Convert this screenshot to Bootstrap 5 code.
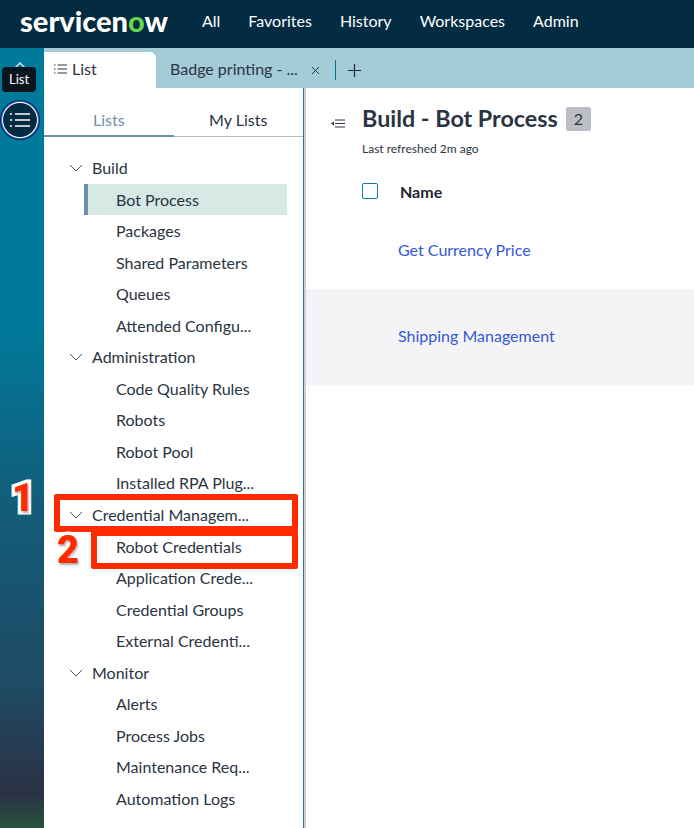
<!DOCTYPE html>
<html lang="en">
<head>
  <meta charset="UTF-8" />
  <meta name="viewport" content="width=device-width, initial-scale=1.0"/>
  <title>Build - Bot Process</title>
  <link href="https://cdn.jsdelivr.net/npm/bootstrap@5.3.0/dist/css/bootstrap.min.css" rel="stylesheet"/>
  <style>
    html, body { height: 100%; }
    body {
      width: 694px;
      height: 828px;
      overflow: hidden;
      position: relative;
      font-family: Lato, "Liberation Sans", sans-serif;
      font-size: 16px;
      color: #2b3442;
      background: #fff;
    }

    /* Top bar */
    .sn-top { height: 48px; background: #032b42; color: #fff; padding-bottom: 6px; }
    .sn-logo { width: 180px; padding-left: 20px; font-size: 29px; font-weight: 900; line-height: 40px; height: 40px; }
    .sn-logo b { color: #62d84e; font-weight: 900; }
    .sn-menu { gap: 28px; padding-left: 22px; }

    /* Left rail */
    .sn-body { height: 780px; }
    .sn-rail {
      width: 44px;
      flex: none;
      background: linear-gradient(180deg, #007a9b 0%, #007a9b 35%, #125d7a 58%, #1f4a63 82%, #2b3145 95.5%, #27533f 100%);
      position: relative;
    }
    .sn-rail-btn {
      position: absolute; left: 3px; top: 55px;
      width: 34px; height: 34px; border-radius: 50%;
      background: #032b42;
      box-shadow: 0 0 0 1px #fff, 0 0 0 2px #4a5fe0, 0 0 0 3px #032b42;
      display: flex; align-items: center; justify-content: center;
    }
    .sn-caret { position: absolute; left: 13px; top: 14px; }
    .sn-tip {
      position: absolute; left: 2px; top: 19px;
      width: 34px; height: 25px; border-radius: 4px;
      background: #0b1520; color: #fff;
      font-size: 13px; line-height: 24px; text-align: center;
    }

    /* Tabs */
    .sn-tabs { height: 40px; background: #a3cbd8; padding-top: 4px; }
    .sn-tab-on { width: 112px; background: #fff; border-top-right-radius: 6px; padding: 0 0 2px 10px; gap: 5px; }
    .sn-tab-off { width: 152px; padding-left: 14px; margin-bottom: 3px; }
    .sn-tab-x { margin-left: 3px; }
    .sn-tab-sep { width: 1px; height: 20px; background: #0a6f8f; margin-left: 15px; }
    .sn-tab-plus { margin-left: 12px; }

    /* Side list */
    .sn-side { width: 262px; flex: none; border-right: 3px solid #ccd0d8; position: relative; }
    .sn-side::after { content: ""; position: absolute; right: -1px; top: 0; bottom: 0; width: 1px; background: #33708c; }
    .sn-sw { height: 49px; padding-top: 22px; }
    .sn-sw div { flex: 1 1 0; text-align: center; height: 27px; border-bottom: 1px solid #b8bcc8; line-height: 19px; }
    .sn-sw .sn-sw-on { color: #6f8fae; border-bottom: 2px solid #6f8fae; }
    .sn-tree { padding-top: 15px; }
    .sn-row { height: 31.55px; line-height: 31.5px; white-space: nowrap; }
    .sn-group { padding-left: 48px; position: relative; }
    .sn-group svg { position: absolute; left: 25px; top: 12px; }
    .sn-leaf { padding-left: 72px; }
    .sn-leaf-on { margin-left: 40px; width: 203px; padding-left: 28px; background: #d7e9e4; border-left: 4px solid #6f8fae; }

    /* Main */
    .sn-main { flex: 1 1 auto; min-width: 0; position: relative; }
    .sn-head { padding: 12px 0 0 56px; height: 80px; }
    .sn-collapse { position: absolute; left: 25px; top: 31px; }
    .sn-title { font-size: 23.3px; font-weight: 700; line-height: 36px; margin: 0; color: #2b3442; }
    .sn-count { background: #bdbdc7; border-radius: 2px; font-size: 16px; padding: 0 8px; height: 24px; line-height: 24px; margin: 2px 0 0 8px; display: inline-block; font-weight: 400; }
    .sn-refresh { font-size: 12px; line-height: 14px; margin-top: 6px; }
    .sn-th { padding: 15px 0 0 56px; height: 62px; gap: 22px; font-weight: 700; color: #1f2733; }
    .sn-check { width: 16px; height: 16px; border: 1.5px solid #0a7b9c; border-radius: 2px; }
    .sn-cell { padding-left: 92px; }
    .sn-cell a { color: #3558d4; text-decoration: none; }
    .sn-cell-a { height: 59px; padding-top: 8px; }
    .sn-cell-b { height: 96px; padding-top: 35px; background: #f4f4f6; }

    /* Annotations */
    .sn-mark { position: absolute; border: 6px solid #ff2a00; border-radius: 2px; }
    .sn-mark-1 { left: 54px; top: 494px; width: 244px; height: 38px; }
    .sn-mark-2 { left: 91px; top: 530px; width: 207px; height: 39px; }
    .sn-num {
      position: absolute; font-family: Roboto, "Liberation Sans", sans-serif; font-weight: 900;
      font-size: 38px; line-height: 38px; color: #ff2a00;
      -webkit-text-stroke: 7px #fff; paint-order: stroke fill;
      text-shadow: 1px 2px 2px rgba(0,0,0,.3);
    }
    .sn-num-1 { left: 12px; top: 479px; }
    .sn-num-2 { left: 57px; top: 531px; }
  </style>
</head>
<body>

<!-- Top bar -->
<div class="sn-top d-flex align-items-center">
  <div class="sn-logo">servicen<b>o</b>w</div>
  <div class="sn-menu d-flex">
    <span>All</span><span>Favorites</span><span>History</span><span>Workspaces</span><span>Admin</span>
  </div>
</div>

<div class="sn-body d-flex">
  <!-- Rail -->
  <div class="sn-rail">
    <svg class="sn-caret" width="14" height="8" viewBox="0 0 14 8"><path d="M1 7 7 1l6 6" fill="none" stroke="#cfe3ea" stroke-width="1.5"/></svg>
    <div class="sn-tip">List</div>
    <div class="sn-rail-btn">
      <svg width="20" height="14" viewBox="0 0 20 14"><path d="M0 1h2M0 7h2M0 13h2M5 1h15M5 7h15M5 13h15" stroke="#fff" stroke-width="1.5"/></svg>
    </div>
  </div>

  <div class="flex-grow-1 d-flex flex-column" style="min-width:0">
    <!-- Tabs -->
    <div class="sn-tabs d-flex align-items-center">
      <div class="sn-tab-on d-flex align-items-center h-100">
        <svg width="13" height="10" viewBox="0 0 13 10"><path d="M0 1h1.500M0 5h1.500M0 9h1.500M3.500 1H13M3.500 5H13M3.500 9H13" stroke="#2b3442"/></svg>
        <span>List</span>
      </div>
      <div class="sn-tab-off d-flex align-items-center">
        <span class="text-nowrap">Badge printing - ...</span>
      </div>
      <svg class="sn-tab-x" width="9" height="9" viewBox="0 0 9 9"><path d="M1 1l7 7M8 1 1 8" stroke="#2b3442"/></svg>
      <div class="sn-tab-sep"></div>
      <svg class="sn-tab-plus" width="13" height="13" viewBox="0 0 13 13"><path d="M6.500 0v13M0 6.500h13" stroke="#1f2733" stroke-width="1.2"/></svg>
    </div>

    <div class="d-flex flex-grow-1" style="min-height:0">
      <!-- Side list -->
      <div class="sn-side">
        <div class="sn-sw d-flex">
          <div class="sn-sw-on">Lists</div>
          <div>My Lists</div>
        </div>
        <div class="sn-tree" id="tree"></div>
      </div>

      <!-- Main -->
      <div class="sn-main">
        <svg class="sn-collapse" width="14" height="9" viewBox="0 0 14 9"><path d="M4 1h10M4 4.500h10M4 8h10" stroke="#2b3442"/><path d="M0 4.500 3 2.500v4z" fill="#2b3442"/></svg>
        <div class="sn-head">
          <h1 class="sn-title d-flex align-items-center">Build - Bot Process<span class="sn-count">2</span></h1>
          <div class="sn-refresh">Last refreshed 2m ago</div>
        </div>
        <div class="sn-th d-flex align-items-start">
          <div class="sn-check"></div><span style="line-height:18px">Name</span>
        </div>
        <div class="sn-cell sn-cell-a"><a href="#">Get Currency Price</a></div>
        <div class="sn-cell sn-cell-b"><a href="#">Shipping Management</a></div>
      </div>
    </div>
  </div>
</div>

<div class="sn-mark sn-mark-1"></div>
<div class="sn-mark sn-mark-2"></div>
<div class="sn-num sn-num-1">1</div>
<div class="sn-num sn-num-2">2</div>

<script>
  const tree = [
    ["Build", ["Bot Process", "Packages", "Shared Parameters", "Queues", "Attended Configu..."]],
    ["Administration", ["Code Quality Rules", "Robots", "Robot Pool", "Installed RPA Plug..."]],
    ["Credential Managem...", ["Robot Credentials", "Application Crede...", "Credential Groups", "External Credenti..."]],
    ["Monitor", ["Alerts", "Process Jobs", "Maintenance Req...", "Automation Logs"]]
  ];
  const chevron = '<svg width="14" height="8" viewBox="0 0 14 8"><path d="M1 1l6 6 6-6" fill="none" stroke="#4a5563"/></svg>';
  let html = "";
  tree.forEach(g => {
    html += `<div class="sn-row sn-group">${chevron}${g[0]}</div>`;
    g[1].forEach(name => {
      const cls = name === "Bot Process" ? "sn-leaf-on" : "sn-leaf";
      html += `<div class="sn-row ${cls}">${name}</div>`;
    });
  });
  document.getElementById("tree").innerHTML = html;
</script>

<script src="https://cdn.jsdelivr.net/npm/bootstrap@5.3.0/dist/js/bootstrap.bundle.min.js"></script>
</body>
</html>
